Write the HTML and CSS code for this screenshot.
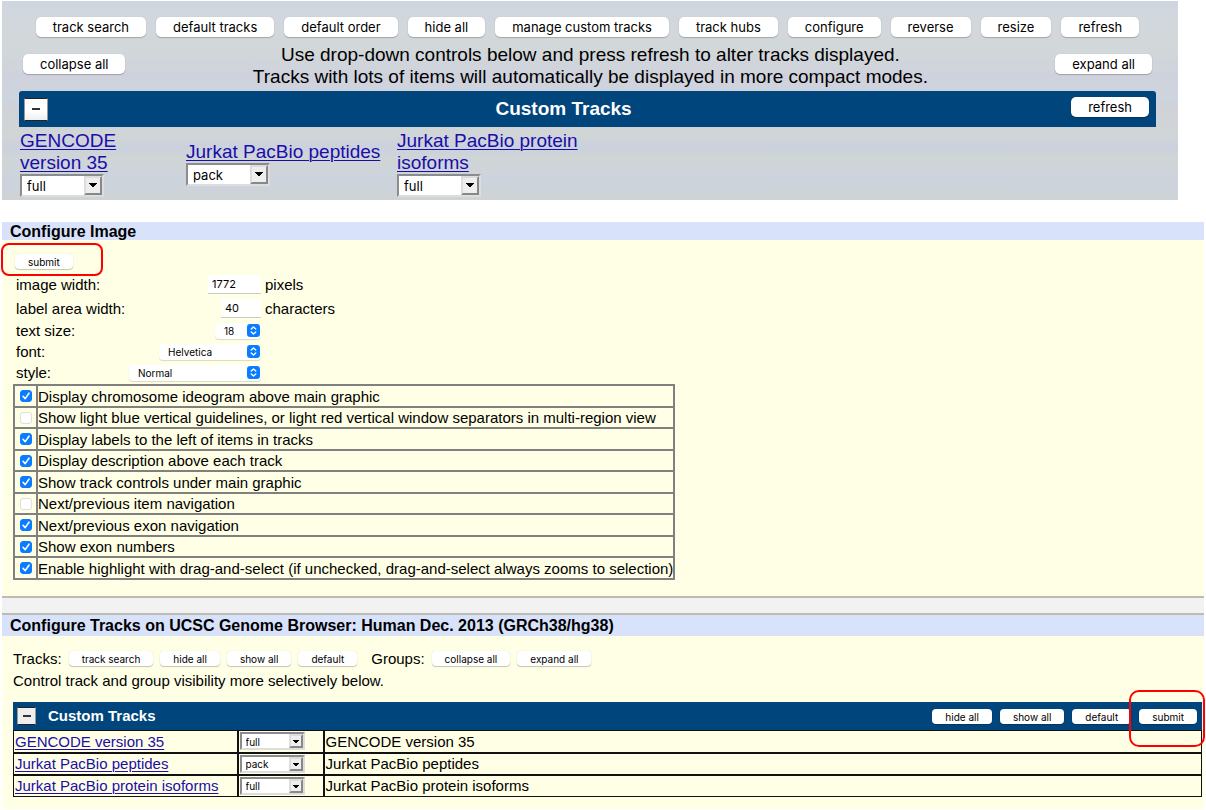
FILE: index.html
```html
<!DOCTYPE html>
<html lang="en">
<head>
<meta charset="utf-8">
<title>Genome Browser track configuration</title>
<link rel="stylesheet" href="styles.css">
</head>
<body>
<section class="controls">
  <div class="toolbar">
    <button class="btn">track search</button>
    <button class="btn">default tracks</button>
    <button class="btn">default order</button>
    <button class="btn">hide all</button>
    <button class="btn">manage custom tracks</button>
    <button class="btn">track hubs</button>
    <button class="btn">configure</button>
    <button class="btn">reverse</button>
    <button class="btn">resize</button>
    <button class="btn">refresh</button>
  </div>
  <div class="help">
    <button class="btn">collapse all</button>
    <p class="help-text">Use drop-down controls below and press refresh to alter tracks displayed.<br>Tracks with lots of items will automatically be displayed in more compact modes.</p>
    <button class="btn">expand all</button>
  </div>
  <div class="group-bar">
    <button class="toggle" aria-label="Collapse Custom Tracks"><span class="minus"></span></button>
    <h2 class="group-title">Custom Tracks</h2>
    <button class="btn">refresh</button>
  </div>
  <div class="tracks">
    <div class="track">
      <a href="#gencode">GENCODE<br>version 35</a>
      <span class="drop"><select class="drop-select" aria-label="GENCODE version 35 visibility"><option>full</option></select></span>
    </div>
    <div class="track">
      <a href="#peptides">Jurkat PacBio peptides</a>
      <span class="drop"><select class="drop-select" aria-label="Jurkat PacBio peptides visibility"><option>pack</option></select></span>
    </div>
    <div class="track">
      <a href="#isoforms">Jurkat PacBio protein<br>isoforms</a>
      <span class="drop"><select class="drop-select" aria-label="Jurkat PacBio protein isoforms visibility"><option>full</option></select></span>
    </div>
  </div>
</section>

<section class="panel image-panel">
  <h2 class="panel-title">Configure Image</h2>
  <div class="panel-body">
    <div class="submit-row"><span class="marked"><button class="btn small">submit</button><span class="mark mark-wide"></span></span></div>
    <div class="form">
      <label for="width">image width:</label><input class="field field-wide" id="width" value="1772"><span>pixels</span>
      <label for="area">label area width:</label><input class="field" id="area" value="40"><span>characters</span>
      <label for="size">text size:</label><span class="pop pop-size"><select class="pop-select" id="size"><option>18</option></select><svg class="pop-icon" viewBox="0 0 12 12"><rect width="12" height="12" rx="3"/><path d="M3.9 4.7 6 2.8l2.1 1.9M3.9 7.3 6 9.2l2.1-1.9"/></svg></span><span></span>
      <label for="font">font:</label><span class="pop pop-font"><select class="pop-select" id="font"><option>Helvetica</option></select><svg class="pop-icon" viewBox="0 0 12 12"><rect width="12" height="12" rx="3"/><path d="M3.9 4.7 6 2.8l2.1 1.9M3.9 7.3 6 9.2l2.1-1.9"/></svg></span><span></span>
      <label for="style">style:</label><span class="pop pop-style"><select class="pop-select" id="style"><option>Normal</option></select><svg class="pop-icon" viewBox="0 0 12 12"><rect width="12" height="12" rx="3"/><path d="M3.9 4.7 6 2.8l2.1 1.9M3.9 7.3 6 9.2l2.1-1.9"/></svg></span><span></span>
    </div>
    <table class="options">
      <tr><td><input class="check" type="checkbox" id="o1" checked></td><td><label for="o1">Display chromosome ideogram above main graphic</label></td></tr>
      <tr><td><input class="check" type="checkbox" id="o2"></td><td><label for="o2">Show light blue vertical guidelines, or light red vertical window separators in multi-region view</label></td></tr>
      <tr><td><input class="check" type="checkbox" id="o3" checked></td><td><label for="o3">Display labels to the left of items in tracks</label></td></tr>
      <tr><td><input class="check" type="checkbox" id="o4" checked></td><td><label for="o4">Display description above each track</label></td></tr>
      <tr><td><input class="check" type="checkbox" id="o5" checked></td><td><label for="o5">Show track controls under main graphic</label></td></tr>
      <tr><td><input class="check" type="checkbox" id="o6"></td><td><label for="o6">Next/previous item navigation</label></td></tr>
      <tr><td><input class="check" type="checkbox" id="o7" checked></td><td><label for="o7">Next/previous exon navigation</label></td></tr>
      <tr><td><input class="check" type="checkbox" id="o8" checked></td><td><label for="o8">Show exon numbers</label></td></tr>
      <tr><td><input class="check" type="checkbox" id="o9" checked></td><td><label for="o9">Enable highlight with drag-and-select (if unchecked, drag-and-select always zooms to selection)</label></td></tr>
    </table>
  </div>
</section>
<div class="divider"></div>
<section class="panel">
  <h2 class="panel-title tall">Configure Tracks on UCSC Genome Browser: Human Dec. 2013 (GRCh38/hg38)</h2>
  <div class="panel-body">
    <div class="actions">
      <span>Tracks:</span>
      <button class="btn small">track search</button>
      <button class="btn small">hide all</button>
      <button class="btn small">show all</button>
      <button class="btn small">default</button>
      <span class="groups-label">Groups:</span>
      <button class="btn small">collapse all</button>
      <button class="btn small">expand all</button>
    </div>
    <p class="note">Control track and group visibility more selectively below.</p>
    <div class="list-bar">
      <button class="toggle toggle-small" aria-label="Collapse Custom Tracks"><span class="minus"></span></button>
      <h3 class="list-title">Custom Tracks</h3>
      <button class="btn small">hide all</button>
      <button class="btn small">show all</button>
      <button class="btn small">default</button>
      <span class="marked"><button class="btn small">submit</button><span class="mark mark-tall"></span></span>
    </div>
    <table class="list">
      <tr><td class="name"><a href="#gencode">GENCODE version 35</a></td><td class="vis"><span class="drop drop-small"><select class="drop-select" aria-label="GENCODE version 35 display"><option>full</option></select></span></td><td>GENCODE version 35</td></tr>
      <tr><td class="name"><a href="#peptides">Jurkat PacBio peptides</a></td><td class="vis"><span class="drop drop-small"><select class="drop-select" aria-label="Jurkat PacBio peptides display"><option>pack</option></select></span></td><td>Jurkat PacBio peptides</td></tr>
      <tr><td class="name"><a href="#isoforms">Jurkat PacBio protein isoforms</a></td><td class="vis"><span class="drop drop-small"><select class="drop-select" aria-label="Jurkat PacBio protein isoforms display"><option>full</option></select></span></td><td>Jurkat PacBio protein isoforms</td></tr>
    </table>
  </div>
</section>
</body>
</html>
```
FILE: styles.css
```css
*, *::after { box-sizing: border-box; }
body {
  margin: 0;
  padding: 1px 2px 2px;
  background: #fff;
  color: #000;
  font: 15px/17px "Liberation Sans", Arial, sans-serif;
}
h2, h3, p { margin: 0; }
a { color: #1a0dab; text-decoration-thickness: 1px; text-underline-offset: 2px; }
button, input, select { margin: 0; font-family: Inter, sans-serif; color: #000; }

.btn {
  height: 20px;
  padding: 1px 17px 0;
  border: 0;
  border-radius: 5px;
  background: #fff;
  box-shadow: 0 1px 1px rgba(0, 0, 0, .22), 0 0 1px rgba(0, 0, 0, .15);
  font-size: 13px;
  line-height: 19px;
  white-space: nowrap;
}
.btn.small {
  height: 15px;
  padding: 1px 13px 0;
  border-radius: 4px;
  font-size: 10px;
  line-height: 14px;
}

.controls {
  margin-right: 26px;
  padding: 16px 22px 0 17px;
  background: linear-gradient(#d0d6df 0, #d2d8d9 45px, #cfd2dc 75px, #cdd5df 97px, #d0d2d8 108px, #d0d5d6 135px, #cbd1dd 146px, #d0d5d6 158px, #ccd3dd 180px, #ced3d5 199px);
  font-size: 19px;
  line-height: 22px;
}
.toolbar { display: flex; justify-content: center; gap: 10px; }
.help {
  display: flex;
  justify-content: space-between;
  align-items: center;
  height: 54px;
  padding: 0 4px;
}
.help-text { padding-top: 3px; text-align: center; }
.group-bar {
  display: flex;
  align-items: center;
  justify-content: space-between;
  height: 36px;
  padding: 0 7px 0 5px;
  border-radius: 3px 3px 0 0;
  background: #00457c;
  color: #fff;
}
.group-bar .btn { margin-bottom: 4px; }
.group-title { padding-left: 8px; flex: 1; text-align: center; font-size: 19px; line-height: 22px; }
.toggle {
  display: grid;
  place-items: center;
  width: 24px;
  height: 23px;
  padding: 0;
  border: 1px solid #222;
  border-color: #222 #999;
  background: linear-gradient(#fff 60%, #eee);
}
.toggle-small { width: 19px; height: 18px; background: #eee; }
.minus { width: 8px; height: 2px; background: #333; }

.tracks {
  display: grid;
  grid-template-columns: 166px 211px auto;
  align-items: center;
  height: 73px;
  padding-left: 1px;
}
.track { display: flex; flex-direction: column; align-items: flex-start; }
.drop {
  position: relative;
  display: block;
  width: 84px;
  height: 23px;
  border: 2px solid;
  border-color: #8c8c8c #ddd #ddd #8c8c8c;
  background: #fff;
}
/* Bevelled arrow button at the right end of the drop-down. */
.drop::after {
  content: "";
  position: absolute;
  top: 0;
  right: 0;
  width: 18px;
  height: 19px;
  border: 2px solid;
  border-color: #ddd #888 #888 #ddd;
  background: linear-gradient(#000, #000) 3px 5px / 8px 1px no-repeat, linear-gradient(#000, #000) 4px 6px / 6px 1px no-repeat, linear-gradient(#000, #000) 5px 7px / 4px 1px no-repeat, linear-gradient(#000, #000) 6px 8px / 2px 1px no-repeat, #eee;
  pointer-events: none;
}
.drop-select {
  appearance: none;
  display: block;
  width: 100%;
  height: 100%;
  padding: 1px 5px 0;
  border: 0;
  background: transparent;
  font-size: 13px;
}
.drop-small { width: 65px; height: 18px; }
.drop-small::after { width: 14px; height: 14px; background-size: 6px 1px, 4px 1px, 2px 1px, 0 0, auto; background-position: 2px 4px, 3px 5px, 4px 6px, 0 0, 0 0; }
.drop-small .drop-select { font-size: 10px; padding: 1px 4px 0; }

.panel { background: #ffffe6; }
.image-panel { margin-top: 22px; }
.panel-title {
  padding: 1px 0 0 8px;
  background: #d8e3fb;
  font-size: 16px;
  line-height: 17px;
}
.panel-title.tall { line-height: 20px; }
.panel-body { padding: 13px 2px 12px 11px; }
.image-panel .panel-body { padding: 14px 2px 16px 11px; }
.submit-row { display: flex; padding: 0 2px 3px; }
.marked { position: relative; display: flex; }
.mark {
  position: absolute;
  border: 2px solid #f00;
  border-radius: 8px;
  pointer-events: none;
}
.mark-wide { inset: -11px -30px -7px -14px; }
.mark-tall { inset: -19px -8px -23px -10px; border-radius: 10px; }

.form {
  display: grid;
  grid-template-columns: 113px 132px auto;
  grid-template-rows: 24px 24px 21px 21px 21px;
  align-items: center;
  padding: 0 0 1px 3px;
}
.form > :nth-child(3n + 2) { justify-self: end; }
.form > :nth-child(3n) { padding-left: 4px; }
.field {
  width: 40px;
  height: 19px;
  padding: 0 4px;
  border: 0;
  border-bottom: 1px solid #ccc;
  background: #fff;
  font-size: 11px;
}
.field-wide { width: 53px; }
.pop {
  position: relative;
  height: 16px;
  border-radius: 4px;
  background: #fff;
  box-shadow: 0 1px 1px rgba(0, 0, 0, .15);
}
.pop-size { width: 46px; }
.pop-font { width: 102px; }
.pop-style { width: 132px; }
.pop-select {
  appearance: none;
  display: block;
  width: 100%;
  height: 16px;
  padding: 1px 9px 0;
  border: 0;
  background: transparent;
  font-size: 10px;
}
.pop-icon { position: absolute; top: 1px; right: 1px; width: 13px; height: 13px; pointer-events: none; }
.pop-icon rect { fill: #0a7cff; }
.pop-icon path { fill: none; stroke: #fff; stroke-width: 1.2; stroke-linecap: round; stroke-linejoin: round; }

.options { border-collapse: collapse; border: 2px solid #808080; }
.options td { height: 21px; padding: 0; border: 2px solid #808080; }
.options tr:nth-child(odd) td { height: 22px; }
.options td:first-child { padding: 0 4px 0 5px; }
.check {
  appearance: none;
  display: block;
  width: 12px;
  height: 12px;
  border: 1px solid #ddd;
  border-radius: 3px;
  background: #fff;
}
.check:checked {
  border-color: #0a7cff;
  background: url("data:image/svg+xml,%3Csvg xmlns='http://www.w3.org/2000/svg' viewBox='0 0 10 10'%3E%3Cpath d='M2 5.3 4.2 7.6 8 2.2' fill='none' stroke='white' stroke-width='1.6' stroke-linecap='round' stroke-linejoin='round'/%3E%3C/svg%3E") #0a7cff;
}

.divider {
  height: 19px;
  border: solid #bcbcb4;
  border-width: 2px 0;
  background: #f2f2f2;
}
.actions { display: flex; align-items: center; gap: 7px; height: 18px; }
.groups-label { margin-left: 7px; }
.note { padding: 5px 0 13px; }
.list-bar {
  display: flex;
  align-items: center;
  gap: 8px;
  height: 28px;
  padding: 0 5px 0 4px;
  background: #00457c;
  color: #fff;
}
.list-title { flex: 1; padding: 0 0 2px 4px; font-size: 15px; line-height: 17px; }
.list { width: 100%; border-collapse: collapse; }
.list td { height: 22px; padding: 0 1px; border: 2px solid #111; }
.list tr:first-child td { border-top-width: 1px; }
.list tr:last-child td { border-bottom-width: 1px; }
.list td:first-child { border-left-width: 1px; }
.list td:last-child { border-right-width: 1px; }
.list .name { width: 224px; }
.list .vis { width: 86px; }
```
